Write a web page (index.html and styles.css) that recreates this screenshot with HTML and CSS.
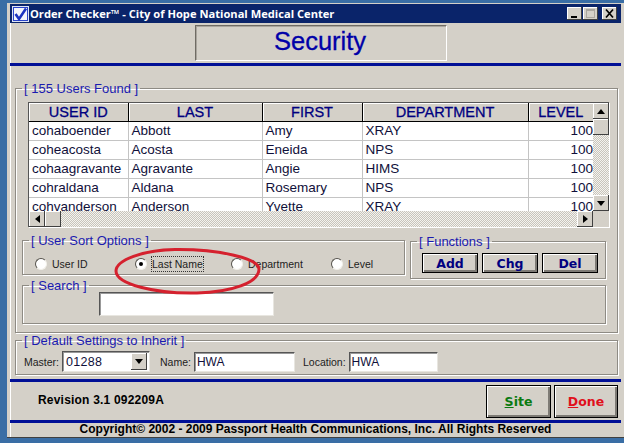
FILE: index.html
```html
<!DOCTYPE html>
<html lang="en">
<head>
  <meta charset="UTF-8" />
  <title>Order Checker - Security</title>
  <link rel="stylesheet" href="styles.css">
</head>
<body>
  <div class="janela">
    <div class="titulo">
      <svg class="logo" width="17" height="16" viewBox="0 0 17 16">
        <rect x="0.5" y="0.5" width="16" height="15" fill="#2a44c8" stroke="#dfe4f4"/>
        <rect x="2" y="2" width="13" height="12" fill="#f4f6fc"/>
        <path d="M3.5 8 L7 13 L14 2.5" fill="none" stroke="#1c34c0" stroke-width="2.6"/>
      </svg>
      <span class="titulo-texto">Order Checker™ - City of Hope National Medical Center</span>
      <div class="botoes-janela">
        <span class="bj"><svg width="13" height="11"><rect x="3" y="8" width="6" height="2" fill="#000"/></svg></span>
        <span class="bj bj-max"><svg width="13" height="11"><rect x="2.5" y="1.500" width="8" height="8" fill="none" stroke="#aaa69e"/><rect x="2" y="1" width="9" height="2" fill="#aaa69e"/></svg></span>
        <span class="bj"><svg width="13" height="11"><path d="M3 1.500 L10 9.500 M10 1.500 L3 9.500" stroke="#000" stroke-width="1.700"/></svg></span>
      </div>
    </div>

    <div class="cabecalho">
      <div class="caixa-titulo">Security</div>
    </div>
    <div class="regua"></div>

    <fieldset class="grupo grupo-usuarios">
      <legend>[ 155 Users Found ]</legend>
      <div class="grade">
        <div class="grade-corpo">
          <table>
            <colgroup>
              <col class="c1"><col class="c2"><col class="c3"><col class="c4"><col class="c5">
            </colgroup>
            <thead>
              <tr><th>USER ID</th><th>LAST</th><th>FIRST</th><th>DEPARTMENT</th><th>LEVEL</th></tr>
            </thead>
            <tbody>
              <tr><td>cohaboender</td><td>Abbott</td><td>Amy</td><td>XRAY</td><td class="num">100</td></tr>
              <tr><td>coheacosta</td><td>Acosta</td><td>Eneida</td><td>NPS</td><td class="num">100</td></tr>
              <tr><td>cohaagravante</td><td>Agravante</td><td>Angie</td><td>HIMS</td><td class="num">100</td></tr>
              <tr><td>cohraldana</td><td>Aldana</td><td>Rosemary</td><td>NPS</td><td class="num">100</td></tr>
              <tr><td>cohvanderson</td><td>Anderson</td><td>Yvette</td><td>XRAY</td><td class="num">100</td></tr>
            </tbody>
          </table>
        </div>
        <div class="scroll-v">
          <span class="seta"><svg width="8" height="5"><path d="M4 0 L8 5 L0 5 Z"/></svg></span>
          <span class="seta"></span>
          <span class="trilha"></span>
          <span class="seta"><svg width="8" height="5"><path d="M0 0 L8 0 L4 5 Z"/></svg></span>
        </div>
        <div class="scroll-h">
          <span class="seta"><svg width="5" height="8"><path d="M5 0 L5 8 L0 4 Z"/></svg></span>
          <span class="seta"></span>
          <span class="trilha"></span>
          <span class="seta"><svg width="5" height="8"><path d="M0 0 L5 4 L0 8 Z"/></svg></span>
        </div>
      </div>

      <div class="linha-opcoes">
        <fieldset class="grupo grupo-ordem">
          <legend>[ User Sort Options ]</legend>
          <div class="radios">
            <label class="radio"><span class="bola"></span>User ID</label>
            <label class="radio"><span class="bola marcada"></span><span class="foco">Last Name</span></label>
            <label class="radio"><span class="bola"></span>Department</label>
            <label class="radio"><span class="bola"></span>Level</label>
          </div>
        </fieldset>
        <fieldset class="grupo grupo-funcoes">
          <legend>[ Functions ]</legend>
          <div class="funcoes">
            <button class="btn">Add</button>
            <button class="btn">Chg</button>
            <button class="btn">Del</button>
          </div>
        </fieldset>
      </div>

      <fieldset class="grupo grupo-busca">
        <legend>[ Search ]</legend>
        <div class="campo campo-busca"></div>
      </fieldset>
    </fieldset>

    <fieldset class="grupo grupo-padrao">
      <legend>[ Default Settings to Inherit ]</legend>
      <div class="linha-padrao">
        <span class="rotulo">Master:</span>
        <div class="campo combo">
          <span class="combo-valor">01288</span>
          <span class="seta"><svg width="8" height="5"><path d="M0 0 L8 0 L4 5 Z"/></svg></span>
        </div>
        <span class="rotulo rotulo-nome">Name:</span>
        <div class="campo campo-nome">HWA</div>
        <span class="rotulo rotulo-local">Location:</span>
        <div class="campo campo-local">HWA</div>
      </div>
    </fieldset>

    <div class="regua regua-baixo"></div>
    <div class="rodape">
      <span class="revisao">Revision 3.1 092209A</span>
      <button class="btn-grande verde"><u>S</u>ite</button>
      <button class="btn-grande vermelho"><u>D</u>one</button>
    </div>
    <div class="regua"></div>
    <div class="copyright">Copyright© 2002 - 2009 Passport Health Communications, Inc. All Rights Reserved</div>

    <!-- circulo vermelho desenhado a mao sobre a tela -->
    <svg class="circulo" width="150" height="50" viewBox="0 0 150 50">
      <path d="M62 2.500 C30 3 3 13 3 24 C3 37 42 47 84 46 C118 45 146 36 146 22 C146 11 104 2 62 2.500 Z" fill="none" stroke="#d5212e" stroke-width="3"/>
    </svg>
  </div>
</body>
</html>
```

FILE: styles.css
```css
* {
  box-sizing: border-box;
}
html, body {
  margin: 0;
  height: 100%;
  overflow: hidden;
}
body {
  background: #3a6ea5;
  font-family: "Liberation Sans", Arial, sans-serif;
  color: #000;
}
.janela {
  position: relative;
  margin: 3px 0 0 7px;
  width: 617px;
  height: 434px;
  background: #d4d0c8;
  border: 3px solid #d4d0c8;
  border-top-width: 1px;
  border-bottom-width: 0;
  box-shadow: inset 1px 1px 0 #fff, 0 1px 0 #404040;
}
.titulo {
  display: flex;
  align-items: center;
  height: 19px;
  background: #0a246a;
  color: #fff;
  padding-left: 2px;
}
.logo {
  margin-right: 1px;
}
.titulo-texto {
  font-family: "Open Sans", sans-serif;
  font-weight: 700;
  font-size: 11.15px;
  white-space: nowrap;
}
.botoes-janela {
  margin-left: auto;
  display: flex;
  gap: 1px;
  padding-right: 4px;
}
.bj {
  display: block;
  width: 15px;
  height: 13px;
  background: #d4d0c8;
  box-shadow: inset -1px -1px 0 #404040, inset 1px 1px 0 #fff;
}
.bj svg {
  display: block;
  margin: 1px;
}
.bj-max {
  margin-right: 3px;
}
.cabecalho {
  height: 40px;
  padding: 2px 0 0 185px;
}
.caixa-titulo {
  width: 252px;
  height: 36px;
  border: 1px solid;
  border-color: #6f6b64 #fff #fff #6f6b64;
  box-shadow: inset 1px 1px 0 #a9a59d;
  color: #0000a8;
  font-size: 25.5px;
  line-height: 30px;
  text-align: center;
  padding-right: 2px;
  -webkit-text-stroke: 0.3px #0000a8;
}
.regua {
  height: 3px;
  background: #000f96;
}
.grupo {
  margin: 0;
  min-width: 0;
  padding: 0;
  border: 1px solid #8e8b84;
  box-shadow: 1px 1px 0 #fff, inset 1px 1px 0 #fff;
}
.grupo legend {
  margin-left: 6px;
  padding: 0 2px;
  height: 15px;
  line-height: 15px;
  font-size: 13px;
  color: #1a1ab0;
  white-space: nowrap;
}
.grupo-usuarios {
  margin: 15px 0 0 5px;
  width: 603px;
  height: 252px;
}
.grade {
  display: grid;
  grid-template-columns: 564px 16px;
  grid-template-rows: 108px 16px;
  width: 581px;
  height: 125px;
  margin: 6px 0 0 12px;
  border-top: 1px solid #555;
  border-left: 1px solid #555;
  background: #d4d0c8;
  box-shadow: 1px 1px 0 #fff;
}
.grade-corpo {
  overflow: hidden;
  background: #fff;
}
table {
  width: 564px;
  table-layout: fixed;
  border-collapse: collapse;
  font-size: 13.5px;
}
.c1 { width: 99px; }
.c2 { width: 134px; }
.c3 { width: 100px; }
.c4 { width: 166px; }
.c5 { width: 65px; }
th {
  height: 18px;
  padding: 0;
  background: #d4d0c8;
  color: #000080;
  font-size: 14.5px;
  font-weight: 400;
  -webkit-text-stroke: 0.3px #000080;
  border-right: 1px solid #000;
  border-bottom: 1px solid #000;
  box-shadow: inset 1px 1px 0 #fff;
}
th:last-child {
  border-right: 0;
}
td {
  height: 19px;
  padding: 0 3px 0 3px;
  color: #10103a;
  white-space: nowrap;
  overflow: hidden;
  border-right: 1px solid #c4c4c4;
  border-bottom: 1px solid #c4c4c4;
}
td:last-child {
  border-right: 0;
}
.num {
  text-align: right;
  padding-right: 0;
}
.seta {
  display: flex;
  align-items: center;
  justify-content: center;
  flex: none;
  width: 16px;
  height: 16px;
  background: #d4d0c8;
  box-shadow: inset -1px -1px 0 #404040, inset 1px 1px 0 #fff;
}
.seta svg {
  display: block;
}
.trilha {
  flex: 1;
  background: repeating-conic-gradient(#c8c4bb 0 25%, #f4f3ef 0 50%) 0 0 / 2px 2px;
}
.scroll-v {
  display: flex;
  flex-direction: column;
  height: 108px;
}
.scroll-h {
  display: flex;
  width: 564px;
}
.linha-opcoes {
  display: flex;
  align-items: flex-start;
  gap: 5px;
  margin: 6px 0 0 6px;
  height: 46px;
}
.grupo-ordem {
  width: 383px;
  height: 42px;
}
.grupo-funcoes {
  width: 196px;
  height: 45px;
  margin-top: 1px;
}
.radios {
  display: grid;
  grid-template-columns: 100px 96px 100px 1fr;
  margin: 8px 0 0 12px;
}
.radio {
  display: flex;
  align-items: center;
  gap: 5px;
  font-size: 10.5px;
  height: 16px;
  color: #1c1c1c;
}
.bola {
  flex: none;
  width: 12px;
  height: 12px;
  border-radius: 50%;
  background: #fff;
  border: 1px solid;
  border-color: #55524c #f2f0ea #f2f0ea #55524c;
  position: relative;
}
.marcada::after {
  content: "";
  position: absolute;
  left: 3px;
  top: 3px;
  width: 4px;
  height: 4px;
  border-radius: 50%;
  background: #000;
}
.foco {
  outline: 1px dotted #333;
  padding: 1px 0;
}
.funcoes {
  display: flex;
  gap: 4px;
  margin: 4px 0 0 11px;
}
.btn, .btn-grande {
  font-family: "DejaVu Sans", sans-serif;
  font-weight: 700;
  background: #d4d0c8;
  border: 1px solid #000;
  box-shadow: inset 1px 1px 0 #fff, inset -2px -2px 0 #7e7b75;
  padding: 0;
}
.btn {
  width: 56px;
  height: 20px;
  font-size: 12.5px;
  color: #000080;
}
.grupo-busca {
  margin: -1px 0 0 6px;
  width: 584px;
  height: 46px;
}
.campo {
  background: #fff;
  border: 1px solid;
  border-color: #555 #e8e6e0 #e8e6e0 #555;
  box-shadow: inset 1px 1px 0 #999;
  color: #10103a;
  font-size: 12px;
}
.campo-busca {
  width: 175px;
  height: 24px;
  margin: -1px 0 0 76px;
}
.grupo-padrao {
  margin: 0 0 0 5px;
  width: 603px;
  height: 42px;
}
.linha-padrao {
  display: flex;
  align-items: center;
  height: 21px;
  margin: 3px 0 0 8px;
}
.rotulo {
  font-size: 10.5px;
  color: #1c1c1c;
}
.combo {
  display: flex;
  align-items: center;
  width: 88px;
  height: 21px;
  margin-left: 3px;
  padding: 1px 2px 1px 3px;
}
.combo-valor {
  flex: 1;
  font-size: 12.5px;
  letter-spacing: 0.3px;
}
.combo .seta {
  height: 17px;
}
.rotulo-nome {
  margin-left: 10px;
}
.campo-nome, .campo-local {
  height: 20px;
  line-height: 18px;
  margin-left: 3px;
  padding-left: 2px;
}
.campo-nome {
  width: 101px;
}
.rotulo-local {
  margin-left: 8px;
}
.campo-local {
  width: 89px;
}
.regua-baixo {
  margin-top: 4px;
}
.rodape {
  display: flex;
  align-items: center;
  gap: 3px;
  height: 38px;
  padding: 0 3px 0 28px;
}
.revisao {
  font-weight: 700;
  font-size: 12px;
  letter-spacing: 0.2px;
  margin-right: auto;
  margin-top: -2px;
}
.btn-grande {
  width: 65px;
  height: 33px;
  font-size: 12.5px;
}
.vermelho {
  width: 64px;
}
.verde {
  color: #0a7a10;
}
.vermelho {
  color: #e0101c;
}
.copyright {
  height: 14px;
  line-height: 13px;
  font-size: 12px;
  font-weight: 700;
  text-align: center;
  white-space: nowrap;
}
.circulo {
  position: absolute;
  left: 103px;
  top: 243px;
  pointer-events: none;
}
```
